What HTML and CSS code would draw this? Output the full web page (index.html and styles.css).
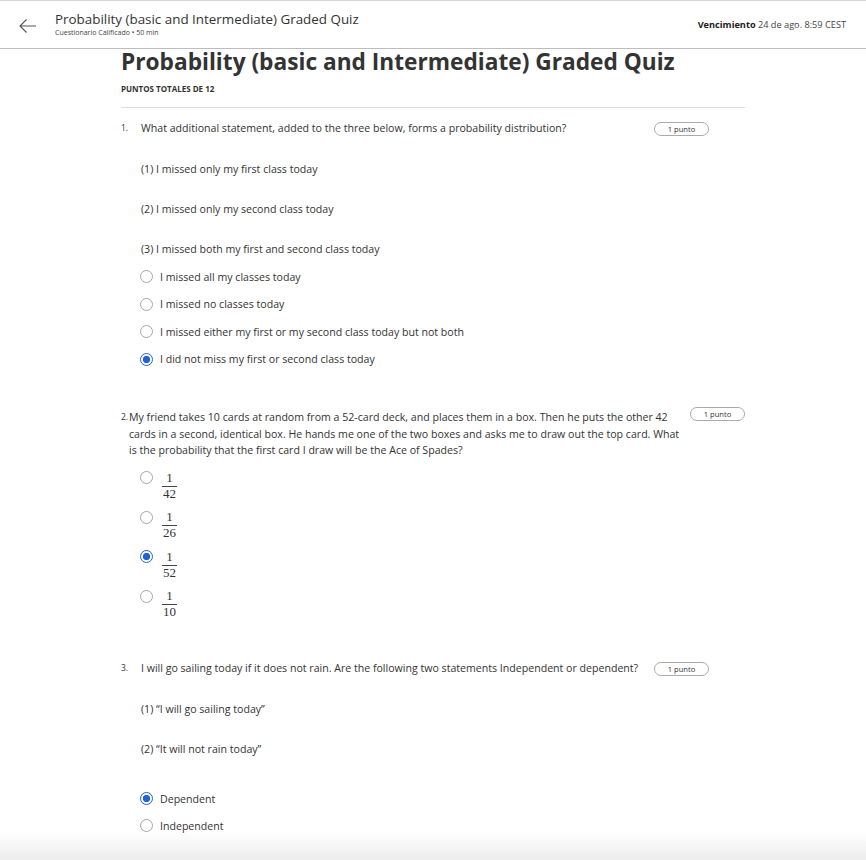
FILE: index.html
```html
<!DOCTYPE html>
<html>
<head>
<meta charset="utf-8">
<link rel="stylesheet" href="styles.css">
</head>
<body>
<header class="topbar">
  <div class="back">
    <svg width="20" height="16" viewBox="0 0 20 16"><path d="M18 8H2M8.5 1.5L2 8l6.5 6.5" fill="none" stroke="#555" stroke-width="1.1"/></svg>
  </div>
  <div class="titles">
    <div class="htitle">Probability (basic and Intermediate) Graded Quiz</div>
    <div class="hsub">Cuestionario Calificado • 50 min</div>
  </div>
  <div class="due"><b>Vencimiento</b> 24 de ago. 8:59 CEST</div>
</header>
<main class="content">
  <h1 class="title">Probability (basic and Intermediate) Graded Quiz</h1>
  <div class="total">PUNTOS TOTALES DE 12</div>
  <div class="divider"></div>

  <section class="q q1">
    <div class="qhead">
      <span class="num">1.</span>
      <span class="qtext">What additional statement, added to the three below, forms a probability distribution?</span>
      <span class="badge">1 punto</span>
    </div>
    <p class="stmt">(1) I missed only my first class today</p>
    <p class="stmt">(2) I missed only my second class today</p>
    <p class="stmt">(3) I missed both my first and second class today</p>
    <div class="opts">
      <div class="opt"><span class="radio"></span>I missed all my classes today</div>
      <div class="opt"><span class="radio"></span>I missed no classes today</div>
      <div class="opt"><span class="radio"></span>I missed either my first or my second class today but not both</div>
      <div class="opt"><span class="radio on"></span>I did not miss my first or second class today</div>
    </div>
  </section>

  <section class="q q2">
    <div class="qhead">
      <span class="num2">2.</span>
      <span class="qtext2">My friend takes 10 cards at random from a 52-card deck, and places them in a box. Then he puts the other 42 cards in a second, identical box. He hands me one of the two boxes and asks me to draw out the top card. What is the probability that the first card I draw will be the Ace of Spades?</span>
      <span class="badge">1 punto</span>
    </div>
    <div class="fopts">
      <div class="fopt"><span class="radio"></span><span class="frac"><span class="n">1</span><span class="d">42</span></span></div>
      <div class="fopt"><span class="radio"></span><span class="frac"><span class="n">1</span><span class="d">26</span></span></div>
      <div class="fopt"><span class="radio on"></span><span class="frac"><span class="n">1</span><span class="d">52</span></span></div>
      <div class="fopt"><span class="radio"></span><span class="frac"><span class="n">1</span><span class="d">10</span></span></div>
    </div>
  </section>

  <section class="q q3">
    <div class="qhead">
      <span class="num">3.</span>
      <span class="qtext">I will go sailing today if it does not rain. Are the following two statements Independent or dependent?</span>
      <span class="badge">1 punto</span>
    </div>
    <p class="stmt">(1) “I will go sailing today”</p>
    <p class="stmt">(2) “It will not rain today”</p>
    <div class="opts opts3">
      <div class="opt"><span class="radio on"></span>Dependent</div>
      <div class="opt"><span class="radio"></span>Independent</div>
    </div>
  </section>
</main>
<div class="footshade"></div>
</body>
</html>
```

FILE: styles.css
```css
* { box-sizing: border-box; }
html, body { margin: 0; padding: 0; background: #fff; }
body {
  font-family: "Open Sans", "Noto Sans", sans-serif;
  color: #333;
  border-top: 1px solid #d6d6d6;
}
.topbar {
  height: 48px;
  border-bottom: 1px solid #bdbdbd;
  display: flex;
  align-items: center;
  padding: 0 20px 0 18px;
}
.back { width: 37px; display: flex; align-items: center; padding-top: 2px; }
.titles { flex: 1; margin-top: -2px; }
.htitle { font-size: 13.4px; color: #333; line-height: 18px; }
.hsub { font-size: 7px; color: #444; line-height: 10px; }
.due { font-size: 9.2px; color: #444; margin-top: -1px; }
.due b { color: #222; font-weight: 700; }

.content { width: 624px; margin: 0 auto; }
.title {
  margin: 0;
  font-size: 22.7px;
  font-weight: 700;
  color: #333;
  line-height: 26px;
}
.total { font-size: 8px; line-height: 10px; font-weight: 700; color: #333; margin-top: 9px; }
.divider { height: 1px; background: #ddd; margin-top: 13px; }

.q { font-size: 10.6px; color: #333; }
.qhead { display: flex; align-items: flex-start; }
.num { width: 20px; font-size: 8.5px; line-height: 14px; }
.qtext { flex: 1; line-height: 14px; }
.q1 .qhead, .q3 .qhead { padding-right: 36px; }
.badge {
  width: 55px; height: 14px;
  border: 1px solid #aaa;
  border-radius: 7px;
  font-size: 7.6px;
  display: flex; align-items: center; justify-content: center;
  color: #333;
  margin-left: 12px;
  flex: none;
}
.q1 { margin-top: 13px; }
.q1 .badge, .q3 .badge { margin-top: 0.5px; }
.stmt { margin: 26px 0 0 20px; line-height: 14px; }
.opts { display: flex; flex-direction: column; gap: 13.5px; margin-left: 19px; margin-top: 14px; }
.opts3 { margin-top: 36px; gap: 13px; }
.opt { display: flex; align-items: center; line-height: 14px; }
.radio {
  width: 13px; height: 13px;
  border: 1px solid #a6a6a6;
  border-radius: 50%;
  margin-right: 7px;
  flex: none;
  background: #fff;
}
.radio.on {
  border: 1.5px solid #2163d4;
  background: radial-gradient(circle, #2163d4 0 3.4px, #fff 3.9px);
}

.q2 { margin-top: 43px; }
.num2 { width: 8px; font-size: 8.5px; line-height: 16.5px; }
.qtext2 { flex: 1; line-height: 16.5px; }
.q2 .badge { margin-top: -2px; margin-left: 6px; }
.fopts { display: flex; flex-direction: column; gap: 11.5px; margin-left: 19px; margin-top: 13px; }
.fopt { display: flex; align-items: flex-start; }
.fopt .radio { margin-right: 9px; margin-top: -0.5px; }
.frac {
  display: inline-flex; flex-direction: column; align-items: center;
  font-family: "Liberation Serif", "Times New Roman", serif;
  font-size: 13px; color: #333; line-height: 12px;
}
.frac .n { padding: 0 1px 2px; }
.frac .d { border-top: 1px solid #444; padding: 1px 1px 0; min-width: 15px; text-align: center; }

.q3 { margin-top: 43px; }

.footshade {
  position: fixed; left: 0; right: 0; bottom: 0; height: 28px;
  background: linear-gradient(to bottom, rgba(245,245,245,0), rgba(236,236,236,1));
  pointer-events: none;
}
```
